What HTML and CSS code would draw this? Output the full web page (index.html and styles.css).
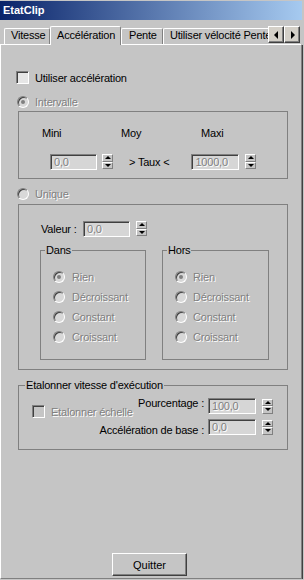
FILE: index.html
```html
<!DOCTYPE html>
<html lang="fr">
<head>
    <meta charset="UTF-8">
    <title>EtatClip</title>
    <link rel="stylesheet" href="styles.css">
</head>
<body>
    <div class="window">
        <div class="titlebar">EtatClip</div>

        <div class="tabbar">
            <div class="tabs">
                <div class="tab tab-vitesse">Vitesse</div>
                <div class="tab tab-active">Accélération</div>
                <div class="tab tab-pente">Pente</div>
                <div class="tab tab-velo">Utiliser vélocité Pente</div>
            </div>
            <div class="tab-arrows">
                <div class="arrow-btn"><span class="tri-left"></span></div>
                <div class="arrow-btn"><span class="tri-right"></span></div>
            </div>
        </div>

        <div class="panel">
            <div class="row use-accel">
                <span class="check"></span>
                <span>Utiliser accélération</span>
            </div>

            <div class="row radio-line intervalle">
                <span class="radio checked"></span>
                <span class="disabled">Intervalle</span>
            </div>

            <div class="group group-range">
                <div class="range-labels">
                    <span class="lbl-mini">Mini</span>
                    <span class="lbl-moy">Moy</span>
                    <span>Maxi</span>
                </div>
                <div class="range-fields">
                    <div class="field"><span class="disabled">0,0</span></div>
                    <div class="spinner"><span class="spin-up"></span><span class="spin-down"></span></div>
                    <span class="taux">&gt; Taux &lt;</span>
                    <div class="field field-wide"><span class="disabled">1000,0</span></div>
                    <div class="spinner"><span class="spin-up"></span><span class="spin-down"></span></div>
                </div>
            </div>

            <div class="row radio-line unique">
                <span class="radio"></span>
                <span class="disabled">Unique</span>
            </div>

            <div class="group group-unique">
                <div class="valeur-row">
                    <span class="lbl-valeur">Valeur :</span>
                    <div class="field"><span class="disabled">0,0</span></div>
                    <div class="spinner"><span class="spin-up"></span><span class="spin-down"></span></div>
                </div>
                <div class="subgroups">
                    <div class="subgroup sub-dans">
                        <span class="group-title">Dans</span>
                        <div class="radio-list">
                            <div class="row"><span class="radio checked"></span><span class="disabled">Rien</span></div>
                            <div class="row"><span class="radio"></span><span class="disabled">Décroissant</span></div>
                            <div class="row"><span class="radio"></span><span class="disabled">Constant</span></div>
                            <div class="row"><span class="radio"></span><span class="disabled">Croissant</span></div>
                        </div>
                    </div>
                    <div class="subgroup sub-hors">
                        <span class="group-title">Hors</span>
                        <div class="radio-list">
                            <div class="row"><span class="radio checked"></span><span class="disabled">Rien</span></div>
                            <div class="row"><span class="radio"></span><span class="disabled">Décroissant</span></div>
                            <div class="row"><span class="radio"></span><span class="disabled">Constant</span></div>
                            <div class="row"><span class="radio"></span><span class="disabled">Croissant</span></div>
                        </div>
                    </div>
                </div>
            </div>

            <div class="group group-scale">
                <span class="group-title">Etalonner vitesse d'exécution</span>
                <div class="scale-body">
                    <div class="row scale-check">
                        <span class="check check-off"></span>
                        <span class="disabled">Etalonner échelle</span>
                    </div>
                    <span class="lbl-pct">Pourcentage :</span>
                    <div class="field field-wide"><span class="disabled">100,0</span></div>
                    <div class="spinner"><span class="spin-up"></span><span class="spin-down"></span></div>
                    <span class="lbl-base">Accélération de base :</span>
                    <div class="field field-wide"><span class="disabled">0,0</span></div>
                    <div class="spinner"><span class="spin-up"></span><span class="spin-down"></span></div>
                </div>
            </div>

            <button class="btn-quit">Quitter</button>
        </div>
    </div>
</body>
</html>
```

FILE: styles.css
```css
* {
    box-sizing: border-box;
}

body {
    margin: 0;
    background-color: #c5c5c5;
    font-family: "Liberation Sans", Arial, sans-serif;
    font-size: 11px;
    letter-spacing: -0.2px;
    color: #000;
    white-space: nowrap;
}

.window {
    width: 302px;
    height: 579px;
    display: flex;
    flex-direction: column;
}

.titlebar {
    margin-top: 1px;
    height: 19px;
    line-height: 19px;
    padding-left: 3px;
    background: linear-gradient(to right, #0a246a, #a6caf0);
    color: #fff;
    font-weight: bold;
    letter-spacing: 0;
}

/* tabs */
.tabbar {
    height: 25px;
    display: flex;
    align-items: flex-end;
    position: relative;
    z-index: 1;
}

.tabs {
    display: flex;
    align-items: flex-end;
    margin-left: 4px;
    width: 264px;
    height: 19px;
    overflow: hidden;
}

.tab {
    flex: none;
    height: 16px;
    margin-bottom: 1px;
    padding-left: 6px;
    line-height: 13px;
    border-top: 1px solid #fff;
    border-left: 1px solid #fff;
    border-right: 1px solid #808080;
    border-radius: 2px 2px 0 0;
}

.tab-vitesse { width: 46px; }
.tab-pente { width: 42px; padding-left: 7px; }
.tab-velo { width: 130px; }

.tab-active {
    width: 71px;
    height: 19px;
    margin-bottom: 0;
    line-height: 16px;
    background-color: #c5c5c5;
}

.tab-arrows {
    display: flex;
    margin-bottom: 2px;
}

.arrow-btn {
    width: 16px;
    height: 17px;
    display: flex;
    align-items: center;
    justify-content: center;
    background-color: #d4d0c8;
    border: 1px solid;
    border-color: #fff #404040 #404040 #fff;
    box-shadow: inset -1px -1px 0 #808080;
}

.tri-left {
    border-right: 4px solid #000;
    border-top: 4px solid transparent;
    border-bottom: 4px solid transparent;
    margin-right: 1px;
}

.tri-right {
    border-left: 4px solid #000;
    border-top: 4px solid transparent;
    border-bottom: 4px solid transparent;
    margin-left: 1px;
}

/* panel */
.panel {
    flex: 1;
    margin-top: -1px;
    display: flex;
    flex-direction: column;
    align-items: flex-start;
    border-top: 1px solid #fff;
    border-left: 1px solid #fff;
    border-right: 1px solid #808080;
    border-bottom: 1px solid #808080;
    box-shadow: 1px 1px 0 #404040;
}

.row {
    display: flex;
    align-items: center;
    height: 13px;
    gap: 6px;
}

.disabled {
    color: #808080;
    text-shadow: 1px 1px 0 #fff;
}

.check {
    flex: none;
    width: 13px;
    height: 13px;
    background-color: #e6e6e6;
    border: 1px solid;
    border-color: #808080 #fff #fff #808080;
    box-shadow: inset 1px 1px 0 #404040;
}

.check-off {
    background-color: #c5c5c5;
}

.radio {
    flex: none;
    position: relative;
    width: 12px;
    height: 12px;
    border-radius: 50%;
    background-color: #d8d8d8;
    border: 1px solid;
    border-color: #808080 #fff #fff #808080;
    box-shadow: inset 1px 1px 0 #404040;
}

.radio.checked::after {
    content: "";
    position: absolute;
    left: 3px;
    top: 3px;
    width: 4px;
    height: 4px;
    border-radius: 50%;
    background-color: #808080;
}

.use-accel {
    margin: 26px 0 0 15px;
}

.radio-line {
    margin-left: 16px;
}

.intervalle { margin-top: 11px; }
.unique { margin-top: 8px; }

.group {
    width: 270px;
    margin-left: 17px;
    border: 1px solid #808080;
}

.group-title {
    display: block;
    width: max-content;
    margin-top: -7px;
    margin-left: 4px;
    padding: 0 1px;
    height: 13px;
    line-height: 13px;
    background-color: #c5c5c5;
}

/* intervalle */
.group-range {
    margin-top: 3px;
    height: 68px;
}

.range-labels {
    display: flex;
    margin-top: 15px;
    padding-left: 23px;
    line-height: 12px;
}

.lbl-mini { width: 79px; }
.lbl-moy { width: 80px; }

.range-fields {
    display: flex;
    align-items: center;
    margin-top: 15px;
    padding-left: 31px;
}

.field {
    flex: none;
    width: 47px;
    height: 16px;
    padding-left: 3px;
    line-height: 14px;
    background-color: #d6d6d6;
    border: 1px solid;
    border-color: #808080 #fff #fff #808080;
    box-shadow: inset 1px 1px 0 #404040;
}

.field-wide { width: 48px; }

.spinner {
    flex: none;
    display: flex;
    flex-direction: column;
    width: 11px;
    height: 15px;
    margin-left: 5px;
    margin-top: -1px;
}

.spin-up,
.spin-down {
    flex: 1;
    display: flex;
    align-items: center;
    justify-content: center;
    border: 1px solid;
    border-color: #fff #808080 #808080 #fff;
}

.spin-up::after {
    content: "";
    border-bottom: 3px solid #000;
    border-left: 3px solid transparent;
    border-right: 3px solid transparent;
}

.spin-down::after {
    content: "";
    border-top: 3px solid #000;
    border-left: 3px solid transparent;
    border-right: 3px solid transparent;
}

.taux {
    margin-left: 16px;
    margin-right: 22px;
}

.range-fields .field-wide + .spinner {
    margin-left: 6px;
}

/* unique */
.group-unique {
    margin-top: 4px;
    height: 166px;
}

.valeur-row {
    display: flex;
    align-items: center;
    margin-top: 16px;
    padding-left: 22px;
}

.lbl-valeur { width: 42px; }

.valeur-row .spinner { margin-left: 6px; }

.subgroups {
    display: flex;
    gap: 16px;
    margin-top: 13px;
    padding-left: 21px;
}

.subgroup {
    height: 110px;
    border: 1px solid #808080;
}

.sub-dans { width: 106px; }
.sub-hors { width: 107px; }

.radio-list {
    display: flex;
    flex-direction: column;
    gap: 7px;
    margin-top: 13px;
    padding-left: 12px;
}

.sub-dans .radio-list .row { gap: 7px; }

/* etalonner */
.group-scale {
    margin-top: 15px;
    height: 65px;
}

.group-scale .group-title {
    margin-left: 6px;
}

.scale-body {
    display: grid;
    grid-template-columns: 1fr 48px 17px;
    grid-template-rows: 16px 16px;
    row-gap: 5px;
    align-items: center;
    margin-top: 6px;
    padding: 0 14px 0 13px;
}

.scale-check {
    grid-row: 1 / 3;
    grid-column: 1;
    align-self: start;
    margin-top: 7px;
}

.scale-body .spinner {
    margin-left: 6px;
    margin-top: 0;
}

.lbl-pct,
.lbl-base {
    grid-column: 1;
    justify-self: end;
    padding-right: 4px;
}

.lbl-pct { grid-row: 1; margin-bottom: 6px; }
.lbl-base { grid-row: 2; margin-top: 6px; }

.btn-quit {
    margin: 103px 0 0 111px;
    width: 75px;
    height: 23px;
    padding: 0;
    font-family: inherit;
    font-size: 11px;
    color: #000;
    background-color: #c5c5c5;
    border: 1px solid;
    border-color: #fff #404040 #404040 #fff;
    box-shadow: inset -1px -1px 0 #808080;
}
```
